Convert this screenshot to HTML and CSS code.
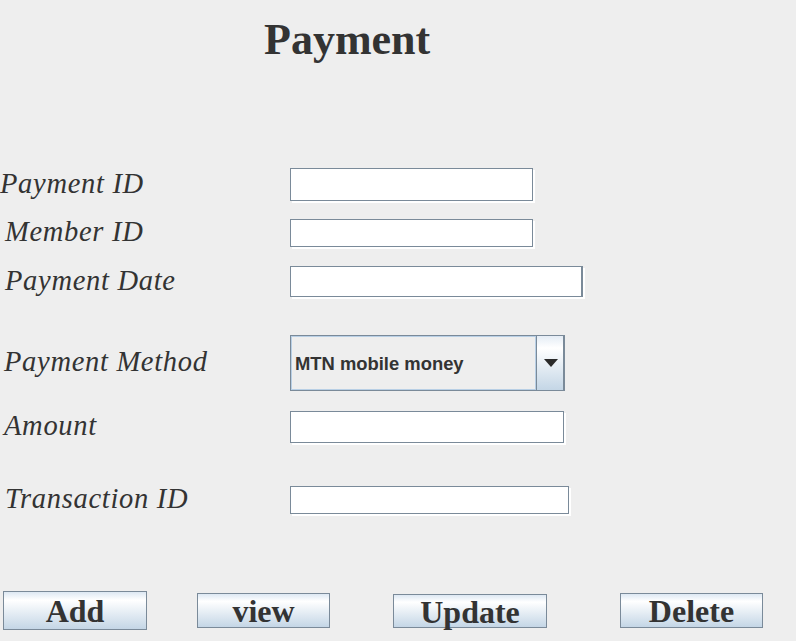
FILE: index.html
```html
<!DOCTYPE html>
<html lang="en">
<head>
<meta charset="utf-8">
<title>Payment</title>
<link rel="stylesheet" href="styles.css">
</head>
<body>
<div class="frame">
  <h1 class="title">Payment</h1>
  <div class="form">
    <div class="row row-1">
      <label class="label label-flush">Payment ID</label>
      <div class="field field-1"></div>
    </div>
    <div class="row row-2">
      <label class="label">Member ID</label>
      <div class="field field-2"></div>
    </div>
    <div class="row row-3">
      <label class="label">Payment Date</label>
      <div class="field field-3"></div>
    </div>
    <div class="row row-4">
      <label class="label label-4">Payment Method</label>
      <div class="combo">
        <div class="combo-value">MTN mobile money</div>
        <div class="combo-button"><span class="arrow"></span></div>
      </div>
    </div>
    <div class="row row-5">
      <label class="label label-4">Amount</label>
      <div class="field field-5"></div>
    </div>
    <div class="row row-6">
      <label class="label">Transaction ID</label>
      <div class="field field-6"></div>
    </div>
  </div>
  <div class="actions">
    <button class="btn btn-add">Add</button>
    <button class="btn btn-view">view</button>
    <button class="btn btn-update">Update</button>
    <button class="btn btn-delete">Delete</button>
  </div>
</div>
</body>
</html>
```
FILE: styles.css
```css
html, body {
  margin: 0;
  padding: 0;
  background: #eeeeee;
}

.frame {
  width: 796px;
  height: 641px;
  overflow: hidden;
  display: flex;
  flex-direction: column;
}

.title {
  margin: 18px 0 0 0;
  padding-left: 264px;
  font-family: "Liberation Serif", "Times New Roman", serif;
  font-weight: bold;
  font-size: 44px;
  line-height: 44px;
  color: #333333;
}

.form {
  display: flex;
  flex-direction: column;
}

.row {
  display: flex;
  align-items: center;
}

.row-1 { margin-top: 106px; }
.row-2 { margin-top: 18px; }
.row-3 { margin-top: 19px; }
.row-4 { margin-top: 38px; }
.row-5 { margin-top: 20px; }
.row-6 { margin-top: 43px; }

.label {
  width: 285px;
  padding-left: 5px;
  margin-bottom: 2px;
  font-family: "Liberation Serif", "Times New Roman", serif;
  font-style: italic;
  font-size: 28.5px;
  letter-spacing: 0.7px;
  line-height: 22px;
  color: #333333;
  white-space: nowrap;
}

.label-flush {
  width: 290px;
  padding-left: 0;
}

.label-4 {
  width: 286px;
  padding-left: 4px;
}

.field {
  box-sizing: border-box;
  background: #ffffff;
  border: 1px solid #7a8a99;
  box-shadow: 2px 2px 0 #ffffff;
}

.field-1 { width: 243px; height: 33px; }
.field-2 { width: 243px; height: 28px; }
.field-3 { width: 293px; height: 31px; border-right-width: 2px; }
.field-5 { width: 274px; height: 32px; }
.field-6 { width: 279px; height: 28px; }

.combo {
  box-sizing: border-box;
  width: 275px;
  height: 56px;
  display: flex;
  border: 1px solid #7a8a99;
  background: #eeeeee;
}

.combo-value {
  flex: 1;
  display: flex;
  align-items: center;
  padding-left: 3px;
  padding-top: 1px;
  border: 1px solid #b8cfe5;
  font-family: "Liberation Sans", Arial, sans-serif;
  font-weight: bold;
  font-size: 18.4px;
  color: #333333;
}

.combo-button {
  box-sizing: border-box;
  width: 28px;
  display: flex;
  align-items: center;
  justify-content: center;
  border-left: 1px solid #7a8a99;
  border-right: 1px solid #7a8a99;
  background: linear-gradient(to bottom, #e4ecf5 0%, #ffffff 22%, #c4d6e6 100%);
}

.arrow {
  width: 0;
  height: 0;
  margin-left: 1px;
  border-left: 7px solid transparent;
  border-right: 7px solid transparent;
  border-top: 8px solid #2a2a2a;
}

.actions {
  display: flex;
  align-items: flex-start;
  margin-top: 77px;
}

.btn {
  box-sizing: border-box;
  margin: 0;
  padding: 0;
  border: 1px solid #7a8a99;
  background: linear-gradient(to bottom, #dde8f3 0%, #ffffff 22%, #c4d6e6 100%);
  font-family: "Liberation Serif", "Times New Roman", serif;
  font-weight: bold;
  font-size: 32px;
  color: #333333;
  text-align: center;
  overflow: visible;
}

.btn-add {
  margin-left: 3px;
  width: 144px;
  height: 39px;
  line-height: 39px;
}

.btn-view {
  margin-left: 50px;
  margin-top: 2px;
  width: 133px;
  height: 35px;
  line-height: 35px;
}

.btn-update {
  margin-left: 63px;
  margin-top: 3px;
  width: 154px;
  height: 34px;
  line-height: 34px;
}

.btn-delete {
  margin-left: 73px;
  margin-top: 2px;
  width: 143px;
  height: 35px;
  line-height: 35px;
}
```
